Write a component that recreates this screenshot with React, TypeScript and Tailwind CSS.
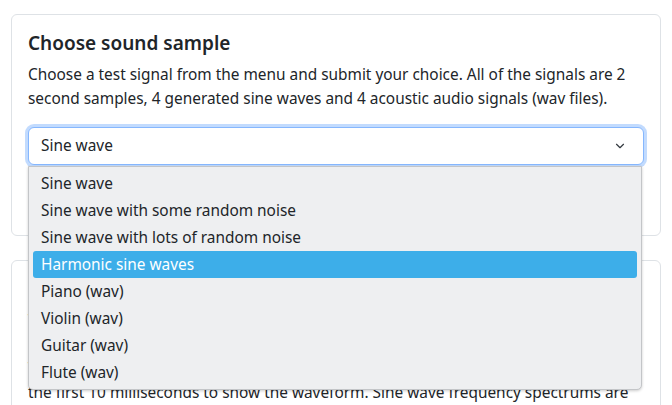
import { ChevronDown } from 'lucide-react';

const signals = [
  'Sine wave',
  'Sine wave with some random noise',
  'Sine wave with lots of random noise',
  'Harmonic sine waves',
  'Piano (wav)',
  'Violin (wav)',
  'Guitar (wav)',
  'Flute (wav)',
];

const selected = 'Harmonic sine waves';

export default function App() {
  return (
    <div className="min-h-[405px] w-[672px] overflow-hidden bg-white px-[11px] pt-[14px] font-['Noto_Sans',sans-serif] text-[#212529]">
      {/* sample picker card */}
      <div className="rounded-md border border-[#dee2e6] p-4">
        <h5 className="mb-2 text-[19px] leading-6 font-semibold">Choose sound sample</h5>
        <p className="mb-4 text-[15.4px] leading-6">
          Choose a test signal from the menu and submit your choice. All of the signals are 2
          <br />
          second samples, 4 generated sine waves and 4 acoustic audio signals (wav files).
        </p>

        <div className="relative">
          <div className="flex h-[38px] items-center justify-between rounded-md border border-[#86b7fe] bg-white pr-[16px] pl-3 text-[15.4px] shadow-[0_0_0_3px_rgba(13,110,253,0.25)]">
            <span>Sine wave</span>
            <ChevronDown size={14} strokeWidth={2} className="text-[#343a40]" />
          </div>

          {/* open list */}
          <ul className="absolute top-[39px] right-[2px] left-0 z-10 rounded-b-[5px] border border-[#c3c5c8] bg-[#eeeff1] px-[4px] py-[3px] text-[15.4px] shadow-[0_1px_3px_rgba(0,0,0,0.2)]">
            {signals.map((s) => (
              <li
                key={s}
                className={
                  s === selected
                    ? 'flex h-[27px] items-center rounded-[3px] bg-[#3daee9] px-2 text-white'
                    : 'flex h-[27px] items-center px-2'
                }
              >
                {s}
              </li>
            ))}
          </ul>
        </div>

        <div className="mt-4 h-[38px]" />
      </div>

      {/* result card, mostly hidden behind the list */}
      <div className="mt-6 rounded-md border border-[#dee2e6] p-4">
        <h5 className="mb-2 text-[19px] leading-6 font-semibold">Sound sample</h5>
        <p className="text-[15.4px] leading-6">
          The selected signal is shown as a waveform and a spectrum.
          <br />
          Listen to the sample, then study the plots below it.
          <br />
          The waveform plot has been zoomed in to show only
          <br />
          the first 10 milliseconds to show the waveform. Sine wave frequency spectrums are
        </p>
      </div>
    </div>
  );
}
